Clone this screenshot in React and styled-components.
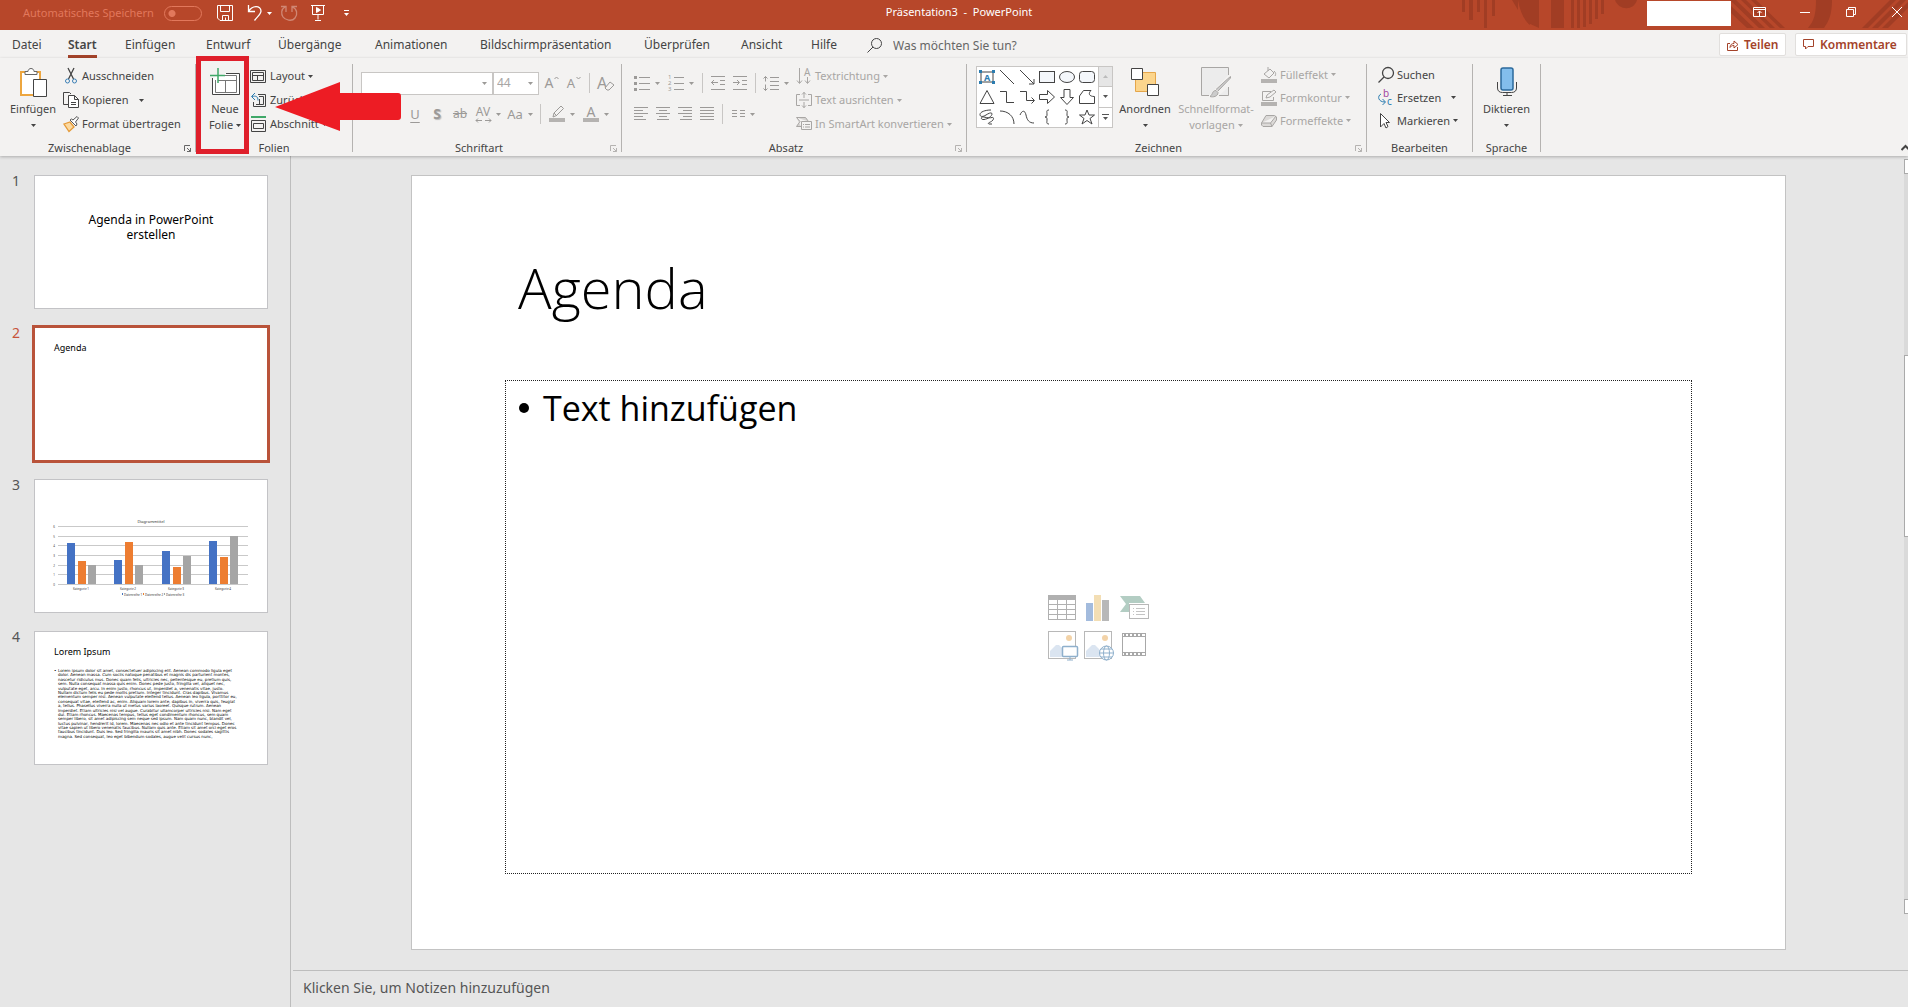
import React from 'react';
import styled, { createGlobalStyle, css } from 'styled-components';

const UI = '"Noto Sans", "Open Sans", sans-serif';
const SLIDE = '"Open Sans", "Noto Sans", sans-serif';

const Global = createGlobalStyle`
  *, *::before, *::after { box-sizing: border-box; }
  body { margin: 0; background: #e6e6e6; font-family: ${UI}; color: #444; }
  button, input, select, textarea { font: inherit; color: inherit; margin: 0; padding: 0; border: 0; background: none; border-radius: 0; }
  ul, ol, h1, h2, p { margin: 0; padding: 0; list-style: none; font-weight: inherit; }
`;

const Page = styled.div`
  display: flex;
  flex-direction: column;
  min-height: 100vh;
  overflow: hidden;
`;

const Glyph = styled.svg`
  display: block;
  flex: none;
  fill: none;
  stroke: currentColor;
  stroke-width: 1;
  overflow: visible;
`;

function Icon({ w = 16, h = 16, children }) {
  return (
    <Glyph width={w} height={h} viewBox={`0 0 ${w} ${h}`} aria-hidden="true">
      {children}
    </Glyph>
  );
}

const Caret = () => (
  <Icon w={5} h={3}>
    <path d="M0 0h5L2.500 3z" fill="currentColor" stroke="none" />
  </Icon>
);

/* ---------- title bar ---------- */

const TitleBar = styled.header`
  position: relative;
  display: grid;
  grid-template-columns: 1fr auto 1fr;
  align-items: start;
  height: 30px;
  background: #b7472a;
  color: #fff;
  font-size: 11px;
  line-height: 16px;
`;
const Art = styled.svg`
  position: absolute;
  right: 0;
  top: 0;
  fill: #a13d24;
`;
const Quick = styled.div`
  display: flex;
  align-items: center;
  height: 26px;
  padding-left: 23px;
`;
const AutoSave = styled.label`
  display: flex;
  align-items: center;
  gap: 10px;
  margin-right: 15px;
  color: #e2785c;
`;
const Toggle = styled.input`
  appearance: none;
  width: 38px;
  height: 15px;
  border: 1px solid #e2785c;
  border-radius: 8px;
  background: radial-gradient(circle at 7px 50%, #e2785c 3px, transparent 4px);
`;
const QuickButton = styled.button`
  display: flex;
  align-items: center;
  gap: 4px;
  width: ${(p) => p.$w}px;
  height: 24px;
  opacity: ${(p) => (p.disabled ? 0.35 : 1)};
`;
const FileName = styled.h1`
  position: relative;
  padding: 4px 0 0 10px;
  font-size: 11px;
  white-space: pre;
`;
const WindowButtons = styled.div`
  position: relative;
  display: flex;
  justify-content: flex-end;
  align-items: flex-start;
`;
const Account = styled.div`
  width: 84px;
  height: 25px;
  margin: 1px 5px 0 0;
  background: #fff;
`;
const WindowButton = styled.button`
  display: flex;
  align-items: center;
  justify-content: ${(p) => (p.$end ? 'flex-end' : 'center')};
  width: ${(p) => (p.$end ? 34 : 46)}px;
  height: 24px;
  padding-right: ${(p) => (p.$end ? 6 : 0)}px;
`;

/* ---------- tabs ---------- */

const TabBar = styled.nav`
  display: flex;
  height: 28px;
  padding-left: 12px;
  background: #f3f2f1;
  font-size: 12px;
`;
const TabSlot = styled.div`
  width: ${(p) => p.$w}px;
`;
const Tab = styled.button`
  height: 28px;
  padding-top: 5px;
  line-height: 20px;
  border-bottom: 3px solid ${(p) => (p.$active ? '#a4432a' : 'transparent')};
  font-weight: ${(p) => (p.$active ? 600 : 400)};
  white-space: nowrap;
`;
const Search = styled.label`
  display: flex;
  align-items: center;
  gap: 11px;
  height: 30px;
`;
const SearchInput = styled.input`
  width: 160px;
  outline: none;
  &::placeholder { color: #666; opacity: 1; }
`;
const TabActions = styled.div`
  display: flex;
  gap: 9px;
  margin: 3px 1px 2px auto;
`;
const ActionButton = styled.button`
  display: flex;
  align-items: center;
  gap: 6px;
  width: ${(p) => p.$w}px;
  padding-left: 7px;
  border: 1px solid #e1dfdd;
  border-radius: 2px;
  background: #fff;
  color: #a4432a;
  font-weight: 600;
`;

/* ---------- ribbon ---------- */

const Ribbon = styled.div`
  position: relative;
  z-index: 1;
  display: flex;
  height: 98px;
  background: #f3f2f1;
  box-shadow: 0 1px 3px rgba(0, 0, 0, 0.25);
  font-size: 11px;
  line-height: 16px;
  white-space: nowrap;
`;
const Divider = styled.div`
  width: 1px;
  margin: 6px 0 4px;
  background: #b5b3b1;
`;
const GroupBox = styled.section`
  display: flex;
  flex-direction: column;
  width: ${(p) => p.$w}px;
`;
const GroupBody = styled.div`
  display: flex;
  align-items: flex-start;
  height: 82px;
  padding-left: ${(p) => p.$pad}px;
`;
const GroupFoot = styled.footer`
  display: flex;
  align-items: center;
  height: 16px;
`;
const GroupName = styled.h2`
  flex: 1;
  font-size: 11px;
  text-align: center;
`;
const Launcher = styled.button`
  width: 16px;
  padding-left: 5px;
  color: ${(p) => (p.disabled ? '#b5b3b1' : '#666')};
`;
const BigButton = styled.button`
  display: flex;
  flex-direction: column;
  align-items: center;
  width: ${(p) => p.$w}px;
  margin-left: ${(p) => p.$gap || 0}px;
  padding-top: 8px;
  color: ${(p) => (p.disabled ? '#a8a6a4' : '#444')};
`;
const BigIcon = styled.span`
  display: flex;
  align-items: center;
  height: 32px;
  margin-bottom: 3px;
`;
const BigLine = styled.span`
  display: flex;
  align-items: center;
  justify-content: center;
  gap: 3px;
  height: 16px;
`;
const List = styled.div`
  display: flex;
  flex-direction: column;
  padding-top: ${(p) => (p.$tight ? 5 : 6)}px;
  margin-left: ${(p) => p.$gap || 0}px;
`;
const Item = styled.button`
  display: flex;
  align-items: center;
  gap: 3px;
  height: ${(p) => p.$h}px;
  color: ${(p) => (p.disabled ? '#a8a6a4' : '#444')};
`;
const ItemCaret = styled.span`
  margin-left: ${(p) => p.$gap}px;
`;
const Tools = styled.div`
  display: flex;
  flex-direction: column;
  gap: 9px;
  padding-top: 14px;
  color: #9c9a98;
`;
const ToolRow = styled.div`
  display: flex;
  align-items: center;
  height: 22px;
  padding-left: ${(p) => p.$pad || 0}px;
`;
const Tool = styled.button`
  display: flex;
  align-items: center;
  justify-content: center;
  gap: 5px;
  width: ${(p) => p.$w || 22}px;
  height: 22px;
`;
const ToolDivider = styled.div`
  width: 1px;
  height: 20px;
  margin: 0 4px;
  background: #c8c6c4;
`;
const Letter = styled.span`
  font-size: ${(p) => p.$size || 13}px;
  ${(p) => p.$kind === 'under' && css`text-decoration: underline; text-underline-offset: 3px;`}
  ${(p) => p.$kind === 'strike' && css`text-decoration: line-through;`}
  ${(p) => p.$kind === 'bold' && css`font-weight: 700; text-shadow: 1px 1px 1px #bbb;`}
`;
const Raised = styled.span`
  display: flex;
  align-items: flex-start;
  gap: 1px;
`;
const Stack = styled.span`
  display: flex;
  flex-direction: column;
  align-items: center;
  line-height: 12px;
`;
const Swatch = styled.span`
  width: 16px;
  height: 4px;
  background: #b5b3b1;
`;
const Combo = styled.label`
  display: grid;
  align-items: center;
  width: ${(p) => p.$w}px;
  height: 23px;
  margin-right: ${(p) => p.$after || 0}px;
  border: 1px solid #c8c6c4;
  background: #fff;
  & > * { grid-area: 1 / 1; }
  & > svg { justify-self: end; margin-right: 5px; }
`;
const Select = styled.select`
  appearance: none;
  width: 100%;
  height: 21px;
  padding-left: 3px;
  color: #a8a6a4;
  font-size: 12px;
  opacity: 1;
`;
const Gallery = styled.div`
  display: flex;
  width: 137px;
  height: 62px;
  margin-top: 8px;
  border: 1px solid #c8c6c4;
  background: #fff;
`;
const Shapes = styled.div`
  display: grid;
  grid-template-columns: repeat(6, 20px);
  grid-auto-rows: 20px;
  width: 121px;
`;
const ShapeButton = styled.button`
  display: grid;
  place-items: center;
`;
const GalleryScroll = styled.div`
  display: flex;
  flex-direction: column;
  width: 14px;
  border-left: 1px solid #c8c6c4;
`;
const ScrollStep = styled.button`
  display: grid;
  place-items: center;
  flex: 1;
  background: ${(p) => (p.disabled ? '#e6e6e6' : '#fff')};
  color: ${(p) => (p.disabled ? '#bbb' : '#555')};
  border-bottom: ${(p) => (p.$last ? 0 : 1)}px solid #c8c6c4;
`;
const Collapse = styled.button`
  align-self: flex-end;
  width: 7px;
  height: 16px;
  margin-left: auto;
  overflow: hidden;
`;

/* marks drawn over the ribbon */
const MarkBox = styled.div`
  position: absolute;
  left: 196px;
  top: -2px;
  width: 53px;
  height: 98px;
  border: 5px solid #df1f2b;
`;
const MarkArrow = styled.svg`
  position: absolute;
  left: 275px;
  top: 23px;
  fill: #ed1c24;
`;

/* ---------- workspace ---------- */

const Workspace = styled.main`
  display: flex;
  flex: 1;
`;
const Thumbs = styled.ol`
  display: flex;
  flex-direction: column;
  gap: 18px;
  width: 291px;
  padding: 19px 0 0 12px;
  border-right: 1px solid #bdbdbd;
`;
const ThumbItem = styled.li`
  display: grid;
  grid-template-columns: 22px 234px;
  color: ${(p) => (p.$active ? '#c7533a' : '#555')};
  font-size: 14px;
  line-height: 12px;
`;
const Thumb = styled.div`
  height: 134px;
  border: 1px solid ${(p) => (p.$active ? '#b9533a' : '#c3c3c6')};
  box-shadow: 0 0 0 ${(p) => (p.$active ? 2 : 0)}px #b9533a;
  background: #fff;
  color: #000;
`;
const CoverTitle = styled.p`
  padding-top: 36px;
  font-size: 12px;
  line-height: 15px;
  text-align: center;
`;
const SmallTitle = styled.p`
  padding: 13px 0 0 19px;
  font-size: 9px;
  line-height: 14px;
`;
const Lorem = styled.div`
  display: flex;
  flex-direction: column;
  justify-content: space-between;
  height: 70px;
  margin: 10px 0 0 23px;
  font-family: "DejaVu Sans", sans-serif;
  font-size: 4px;
  line-height: 4px;
  white-space: nowrap;
`;
const Bullet = styled.span`
  display: inline-block;
  width: 4px;
  margin-left: -4px;
`;

const Editor = styled.div`
  display: flex;
  flex-direction: column;
  flex: 1;
`;
const Stage = styled.div`
  display: flex;
  justify-content: space-between;
  flex: 1;
`;
const Canvas = styled.div`
  display: flex;
  justify-content: center;
  align-items: flex-start;
  flex: 1;
  padding: 19px 118px 20px 120px;
`;
const Slide = styled.article`
  display: flex;
  flex-direction: column;
  width: 100%;
  aspect-ratio: 1375 / 775;
  padding: 0 93px 75px 93px;
  border: 1px solid #c3c3c3;
  background: #fff;
  color: #000;
  font-family: ${SLIDE};
`;
const SlideTitle = styled.h2`
  height: 204px;
  padding: 73px 0 0 13px;
  font-size: 56px;
  line-height: 76px;
  font-weight: 300;
`;
const Body = styled.div`
  display: grid;
  flex: 1;
  border: 1px dotted #222;
  & > * { grid-area: 1 / 1; }
`;
const Points = styled.ul`
  padding: 3px 0 0 37px;
  font-size: 34px;
  line-height: 48px;
`;
const Point = styled.li`
  &::before {
    content: '';
    display: inline-block;
    width: 10px;
    height: 10px;
    margin: 0 14px 8px -24px;
    border-radius: 50%;
    background: #000;
  }
`;
const Picker = styled.div`
  display: grid;
  grid-template-columns: repeat(3, 30px);
  grid-auto-rows: 30px;
  gap: 6px;
  place-self: center;
`;
const PickerButton = styled.button`
  display: block;
`;
const ScrollBar = styled.div`
  display: flex;
  flex-direction: column;
  width: 4px;
  padding: 3px 0 56px;
  background: linear-gradient(#dadada, #dadada) content-box;
`;
const ScrollPart = styled.div`
  flex: ${(p) => p.$flex};
  ${(p) => p.$solid && css`background: #fff; border: 1px solid #aaa; border-right: 0;`}
`;
const Notes = styled.label`
  display: block;
  height: 37px;
  margin-left: 2px;
  border-top: 1px solid #bdbdbd;
`;
const NotesInput = styled.textarea`
  display: block;
  width: 100%;
  height: 36px;
  padding: 6px 0 0 10px;
  resize: none;
  outline: none;
  font-size: 14px;
  line-height: 22px;
  &::placeholder { color: #555; opacity: 1; }
`;

/* ---------- data ---------- */

const tabs = [
  ['Datei', 56], ['Start', 57], ['Einfügen', 81], ['Entwurf', 72], ['Übergänge', 97],
  ['Animationen', 105], ['Bildschirmpräsentation', 164], ['Überprüfen', 97], ['Ansicht', 70], ['Hilfe', 56],
];

const lorem = [
  'Lorem ipsum dolor sit amet, consectetuer adipiscing elit. Aenean commodo ligula eget',
  'dolor. Aenean massa. Cum sociis natoque penatibus et magnis dis parturient montes,',
  'nascetur ridiculus mus. Donec quam felis, ultricies nec, pellentesque eu, pretium quis,',
  'sem. Nulla consequat massa quis enim. Donec pede justo, fringilla vel, aliquet nec,',
  'vulputate eget, arcu. In enim justo, rhoncus ut, imperdiet a, venenatis vitae, justo.',
  'Nullam dictum felis eu pede mollis pretium. Integer tincidunt. Cras dapibus. Vivamus',
  'elementum semper nisi. Aenean vulputate eleifend tellus. Aenean leo ligula, porttitor eu,',
  'consequat vitae, eleifend ac, enim. Aliquam lorem ante, dapibus in, viverra quis, feugiat',
  'a, tellus. Phasellus viverra nulla ut metus varius laoreet. Quisque rutrum. Aenean',
  'imperdiet. Etiam ultricies nisi vel augue. Curabitur ullamcorper ultricies nisi. Nam eget',
  'dui. Etiam rhoncus. Maecenas tempus, tellus eget condimentum rhoncus, sem quam',
  'semper libero, sit amet adipiscing sem neque sed ipsum. Nam quam nunc, blandit vel,',
  'luctus pulvinar, hendrerit id, lorem. Maecenas nec odio et ante tincidunt tempus. Donec',
  'vitae sapien ut libero venenatis faucibus. Nullam quis ante. Etiam sit amet orci eget eros',
  'faucibus tincidunt. Duis leo. Sed fringilla mauris sit amet nibh. Donec sodales sagittis',
  'magna. Sed consequat, leo eget bibendum sodales, augue velit cursus nunc,',
];

const shapes = [
  <g key="0"><rect x="2" y="3" width="12" height="10" stroke="#444" /><g fill="#2b7cb0" stroke="none"><path d="M0 1h3v3H0zM13 1h3v3h-3zM0 12h3v3H0zM13 12h3v3h-3z" /></g><text x="8" y="11.500" fontSize="9" fontWeight="700" fill="#2b7cb0" stroke="none" textAnchor="middle">A</text></g>,
  <path key="1" d="M1 1l14 14" />,
  <g key="2"><path d="M1 1l14 14" /><path d="M15 10v5h-5" /></g>,
  <rect key="3" x="0.500" y="2.500" width="15" height="11" fill="#f4f7fb" />,
  <ellipse key="4" cx="8" cy="8" rx="7.500" ry="5.500" fill="#f4f7fb" />,
  <rect key="5" x="0.500" y="2.500" width="15" height="11" rx="3" fill="#f4f7fb" />,
  <path key="6" d="M8 1.500l7 13H1z" />,
  <path key="7" d="M1 2.500h6.500v11H15" />,
  <g key="8"><path d="M1 2.500h6.500v9H15" /><path d="M12.500 8.500l3 3-3 3" /></g>,
  <path key="9" d="M.5 5.500h8v-4L15.500 8l-7 6.500v-4h-8z" />,
  <path key="10" d="M5 .5h6v8h3.500L8 15.500 1.500 8.500H5z" />,
  <path key="11" d="M.5 14.500V7l4-5.500h7.500c-3 3-2 6 3.500 6v7z" />,
  <path key="12" d="M12 1C6 1 1 3 1 5.500S4 8 7 6s6-3 6-1-4 5-8 5.500S2 7 5 8s6 1 8 .5 2 2 0 3.500-5 2-3 3h3" />,
  <path key="13" d="M1 2c8 0 14 5 14 13" />,
  <path key="14" d="M1 6c2-5 5-5 6 0s3 8 8 8" />,
  <path key="15" d="M10 1c-3 0-2 2-2 4s0 3-2 3c2 0 2 1 2 3s-1 4 2 4" />,
  <path key="16" d="M6 1c3 0 2 2 2 4s0 3 2 3c-2 0-2 1-2 3s1 4-2 4" />,
  <path key="17" d="M8 1l2 5h5.500l-4.500 3.500 2 5.500-5-3.500L3 15l2-5.500L.5 6H6z" />,
];

const bars = [
  [33, 64, 82, 86], [80, 81, 63, 86], [128, 72, 88, 77], [175, 62, 78, 57],
];
const barColors = ['#4472c4', '#ed7d31', '#a5a5a5'];

function Chart() {
  return (
    <Glyph width="232" height="132" viewBox="0 0 232 132" role="img" aria-label="Diagramm">
      {[0, 1, 2, 3, 4, 5, 6].map((n) => {
        const y = Math.round(105 - n * 9.700) - 0.5;
        return (
          <g key={n}>
            <path d={`M23 ${y}H213`} stroke="#c9c9c9" />
            <text x="19" y={y + 1} fontSize="3" fill="#444" stroke="none" textAnchor="middle">{n}</text>
          </g>
        );
      })}
      <text x="116" y="43" fontSize="4" fill="#333" stroke="none" textAnchor="middle">Diagrammtitel</text>
      {bars.map(([x, ...tops], i) => (
        <g key={x} stroke="none">
          {tops.map((t, j) => (
            <rect key={j} x={x - 1 + Math.round(j * 10.500)} y={t - 1} width="8" height={105 - t} fill={barColors[j]} />
          ))}
          <text x={x + 13} y="110" fontSize="3" fill="#333" textAnchor="middle">{`Kategorie ${i + 1}`}</text>
        </g>
      ))}
      {[0, 1, 2].map((i) => (
        <g key={i} stroke="none">
          <rect x={87 + i * 21} y="113" width="1" height="2" fill={barColors[i]} />
          <text x={89 + i * 21} y="116" fontSize="3" fill="#333">{`Datenreihe ${i + 1}`}</text>
        </g>
      ))}
    </Glyph>
  );
}

function Group({ name, w, pad = 0, launcher, disabledLauncher, children }) {
  return (
    <>
      <GroupBox $w={w}>
        <GroupBody $pad={pad}>{children}</GroupBody>
        <GroupFoot>
          <GroupName>{name}</GroupName>
          {launcher && (
            <Launcher aria-label={`${name} Optionen`} disabled={disabledLauncher}>
              <Icon w={7} h={7}><path d="M.5 6V.5H6M3 3l3.500 3.500M6.500 3v3.500H3" /></Icon>
            </Launcher>
          )}
        </GroupFoot>
      </GroupBox>
      <Divider />
    </>
  );
}

function ListItem({ icon, text, caret, h = 24, disabled }) {
  return (
    <Item $h={h} disabled={disabled}>
      <Icon>{icon}</Icon>
      {text}
      {caret !== undefined && <ItemCaret $gap={caret}><Caret /></ItemCaret>}
    </Item>
  );
}

function Lines({ rows }) {
  return (
    <Icon w={14} h={14}>
      {rows.map(([a, b], i) => <path key={i} d={`M${a} ${i * 3 + 0.5}H${b}`} />)}
    </Icon>
  );
}

function ImageBase() {
  return (
    <>
      <rect x="0.500" y="1.500" width="27" height="27" stroke="#b8b8b8" />
      <circle cx="21" cy="8" r="3" fill="#f3d3a8" stroke="none" />
      <path d="M2 27v-6l6-6h3l5 5v7z" fill="#dbe5f1" stroke="none" />
    </>
  );
}

const picker = [
  ['Tabelle', <g key="t" stroke="#b0b0b0"><rect x="0.500" y="1.500" width="27" height="24" /><path d="M0 1h28v5H0z" fill="#b0b0b0" stroke="none" /><path d="M9.500 6v19M18.500 6v19M1 10.500h27M1 15.500h27M1 20.500h27" /></g>],
  ['Diagramm', <g key="d" stroke="none"><path d="M2 9h7v18H2z" fill="#a3bbdd" /><path d="M10 1h7v26h-7z" fill="#f3deb4" /><path d="M18 6h7v21h-7z" fill="#b8b8b8" /></g>],
  ['SmartArt', <g key="s"><path d="M0 2h20l5 7h-16v9H0l6-8z" fill="#b3cdc3" stroke="none" /><rect x="9.500" y="10.500" width="19" height="14" fill="#fff" stroke="#b8b8b8" /><path d="M13 14.500h1M16 14.500h9M13 17.500h1M16 17.500h9M13 20.500h1M16 20.500h9" stroke="#c4c4c4" /></g>],
  ['Bilder', <g key="b"><ImageBase /><rect x="14.500" y="16.500" width="15" height="10" rx="1" fill="#fff" stroke="#8fb0cc" strokeWidth="1.500" /><path d="M22 27v3M19 30h6" stroke="#8fb0cc" /></g>],
  ['Onlinebilder', <g key="o"><ImageBase /><g stroke="#8fb0cc"><circle cx="22.500" cy="23" r="7" fill="#fff" /><ellipse cx="22.500" cy="23" rx="3" ry="7" /><path d="M15.500 23h14M17 19h11M17 27h11" /></g></g>],
  ['Video', <g key="v" stroke="#a8a8a8"><rect x="2.500" y="3.500" width="23" height="22" /><path d="M3 6.500h22M3 22.500h22" /><path d="M4 5h20M4 24h20" strokeWidth="2" strokeDasharray="2 2" /></g>],
];

export default function App() {
  return (
    <Page>
      <Global />
      <TitleBar>
        <Art width="448" height="30" viewBox="0 0 448 30">
          <path d="M2 0h3v12H2zM9 0h4v20H9zM17 0h3v12h-3zM24 0h3v28h-3zM32 0h3v16h-3zM52 0h6v10zM68 0h11v28L68 23z" />
          <path d="M58 0h12v25c-7-6-10-14-12-25zM91 0h13v28H91zM111 0h3v28h-3zM117 0h3v28h-3zM123 0h3v27h-3zM129 0h3v24h-3zM135 0h3v19h-3zM141 0h3v14h-3zM155 0h22c-3 11-18 11-22 0z" />
          <path d="M271 6l23 22h-7l-16-15zM276 0l29 28h-6L270 0zM286 0l29 28h-5L281 0zM296 0l29 28h-5L291 0zM356 0h16c0 14-3 21-8 28h-16c6-7 8-14 8-28zM402 28l28-28h6l-28 28zM412 28l28-28h6l-28 28zM422 28l26-26v6l-20 20z" />
        </Art>
        <Quick>
          <AutoSave>
            Automatisches Speichern
            <Toggle type="checkbox" role="switch" />
          </AutoSave>
          <QuickButton $w={30} aria-label="Speichern">
            <Icon><path d="M.5 .5h15v15H3L.5 13zM3.500 .5v6h9v-6M5.500 15.500v-5h6v5M8.500 12.500v3" /></Icon>
          </QuickButton>
          <QuickButton $w={34} aria-label="Rückgängig">
            <Icon><path d="M1.500 0v6.500H8M1.500 6.500C5 0 14 0 14 6c0 3-3 5-6.500 9.500" strokeWidth="1.300" /></Icon>
            <Caret />
          </QuickButton>
          <QuickButton $w={30} disabled aria-label="Wiederholen">
            <Icon><path d="M4 2C0 4 0 9 2 12s9 5 12 1 2-9-2.500-11M11 7V1.500h5M0 1.500h5V7" strokeWidth="1.300" /></Icon>
          </QuickButton>
          <QuickButton $w={33} aria-label="Präsentation starten">
            <Icon><path d="M0 .5h14M1.500 .5v9h11v-9M7 9.500v5M4 15.500h6" /><path d="M5.500 2.500v5l4-2.500z" fill="currentColor" /></Icon>
          </QuickButton>
          <QuickButton $w={10} aria-label="Symbolleiste anpassen">
            <Icon w={5} h={6}><path d="M0 .5h5" /><path d="M0 3h5L2.500 6z" fill="currentColor" stroke="none" /></Icon>
          </QuickButton>
        </Quick>
        <FileName>{'Präsentation3  -  PowerPoint'}</FileName>
        <WindowButtons>
          <Account />
          <WindowButton aria-label="Menübandanzeige"><Icon w={13} h={10}><path d="M.5 .5h12v9H.5zM.5 2.500h12M6.500 9V4M4.500 6l2-2 2 2" /></Icon></WindowButton>
          <WindowButton aria-label="Minimieren"><Icon w={10} h={10}><path d="M0 5.500h10" /></Icon></WindowButton>
          <WindowButton aria-label="Wiederherstellen"><Icon w={10} h={10}><path d="M.5 2.500h7v7h-7zM2.500 2.500v-2h7v7h-2" /></Icon></WindowButton>
          <WindowButton $end aria-label="Schließen"><Icon w={10} h={10}><path d="M0 0l10 10M10 0L0 10" /></Icon></WindowButton>
        </WindowButtons>
      </TitleBar>

      <TabBar>
        {tabs.map(([t, w]) => (
          <TabSlot key={t} $w={w}><Tab $active={t === 'Start'}>{t}</Tab></TabSlot>
        ))}
        <Search>
          <Icon w={15} h={15}><circle cx="9.500" cy="5.500" r="5" /><path d="M6 9L.5 14.500" /></Icon>
          <SearchInput placeholder="Was möchten Sie tun?" aria-label="Suche" />
        </Search>
        <TabActions>
          <ActionButton $w={67}>
            <Icon w={11} h={12}><path d="M3 4.500H.5v7h10V8M3 8.500c0-3 2-4 4-4V2L11 5.500 7 9V6.500c-2 0-3 .5-4 2z" /></Icon>
            Teilen
          </ActionButton>
          <ActionButton $w={112}>
            <Icon w={11} h={11}><path d="M.5 .5h10v7H5l-2.500 2.500V7.500h-2z" /></Icon>
            Kommentare
          </ActionButton>
        </TabActions>
      </TabBar>

      <Ribbon>
        <Group name="Zwischenablage" w={195} pad={6} launcher>
          <BigButton $w={54}>
            <BigIcon>
              <Icon w={28} h={30}>
                <path d="M2 5h19v23H2z" fill="#fff" stroke="#eda63f" strokeWidth="2" />
                <path d="M6 7.500V4.500h3c0-4 6-4 6 0h3v3z" fill="#fff" stroke="#666" />
                <path d="M14.500 12.500h13v17h-13z" fill="#fff" stroke="#444" />
              </Icon>
            </BigIcon>
            <BigLine>Einfügen</BigLine>
            <BigLine><Caret /></BigLine>
          </BigButton>
          <List $gap={3}>
            <ListItem text="Ausschneiden" icon={<><path d="M5 0l5.500 11M11 0L5.500 11" strokeWidth="1.300" /><g stroke="#3a7fb5"><circle cx="4.500" cy="13" r="2" /><circle cx="11.500" cy="13" r="2" /></g></>} />
            <ListItem text="Kopieren" caret={7} icon={<><path d="M5 12.500H.5v-12h6L8 2" /><path d="M5.500 3.500h6l4 4v8h-10zM11.500 3.500v4h4M8 10.500h5M8 12.500h5" fill="#fff" /></>} />
            <ListItem text="Format übertragen" icon={<><path d="M1 8l6-2 4 5-5 4.500z" fill="#fbd9a0" stroke="#e59a38" strokeWidth="1.300" /><path d="M7 4l6 6 1-2-1.500-2L15.500 2 14 .5 10 4 8.500 3z" fill="#fff" stroke="#555" /></>} />
          </List>
        </Group>

        <Group name="Folien" w={156} pad={3}>
          <BigButton $w={52}>
            <BigIcon>
              <Icon w={30} h={28}>
                <path d="M2.500 10v16.500h27v-21H16" fill="#fff" stroke="#444" />
                <path d="M5.500 12v12.500h21v-17H13M8 12.500h18M15.500 12.500v12" fill="none" stroke="#777" />
                <path d="M8 0v15M0 7.500h15" stroke="#3fa868" strokeWidth="1.500" />
              </Icon>
            </BigIcon>
            <BigLine>Neue</BigLine>
            <BigLine>Folie<Caret /></BigLine>
          </BigButton>
          <List>
            <ListItem text="Layout" caret={0} icon={<path d="M-.5 2.500h15v12h-15zM1.500 4.500h11v8h-11zM1.500 7.500h11M6.500 7.500v5" />} />
            <ListItem text="Zurücksetzen" icon={<><path d="M7 2.500h7.500v12H2.500V10M8 4.500h4.500v8H5M8.500 7v5" /><path d="M1 4.500c4-1 6 0 6 4M4 1L.5 4.500 4 8" stroke="#2b7cb0" /></>} />
            <ListItem text="Abschnitt" caret={0} icon={<><path d="M0 0h15v2H0z" fill="#3fa868" stroke="none" /><path d="M.5 4.500h14v11H.5zM2.500 7.500h10v5h-10z" /></>} />
          </List>
        </Group>

        <Group name="Schriftart" w={268} pad={8} launcher disabledLauncher>
          <Tools>
            <ToolRow>
              <Combo $w={132}><Select aria-label="Schriftart" disabled><option></option></Select><Caret /></Combo>
              <Combo $w={46} $after={2}><Select aria-label="Schriftgrad" disabled><option>44</option></Select><Caret /></Combo>
              <Tool disabled><Raised><Letter $size={14}>A</Letter><Icon w={5} h={7}><path d="M.5 4L2.500 2l2 2" /></Icon></Raised></Tool>
              <Tool disabled><Raised><Letter>A</Letter><Icon w={5} h={7}><path d="M.5 2l2 2 2-2" /></Icon></Raised></Tool>
              <ToolDivider />
              <Tool disabled><Raised><Letter $size={16}>A</Letter><Icon w={5} h={16}><path d="M-3 13l5-6 4 3-5 5h-2z" fill="#f3f2f1" /></Icon></Raised></Tool>
            </ToolRow>
            <ToolRow $pad={43}>
              <Tool disabled><Letter $kind="under">U</Letter></Tool>
              <Tool disabled><Letter $kind="bold" $size={14}>S</Letter></Tool>
              <Tool $w={24} disabled><Letter $kind="strike" $size={12}>ab</Letter></Tool>
              <Tool $w={32} disabled>
                <Stack><Letter $size={12}>AV</Letter><Icon w={15} h={5}><path d="M0 2.500h6M9 2.500h6M2 .5l-2 2 2 2M13 .5l2 2-2 2" /></Icon></Stack><Caret />
              </Tool>
              <Tool $w={32} disabled><Letter>Aa</Letter><Caret /></Tool>
              <ToolDivider />
              <Tool $w={34} disabled>
                <Stack><Icon w={16} h={12}><path d="M4 11l1-4 7-7 2.500 2.500-7 7zM5 7l3 3" /></Icon><Swatch /></Stack><Caret />
              </Tool>
              <Tool $w={34} disabled><Stack><Letter $size={14}>A</Letter><Swatch /></Stack><Caret /></Tool>
            </ToolRow>
          </Tools>
        </Group>

        <Group name="Absatz" w={344} pad={8} launcher disabledLauncher>
          <Tools>
            <ToolRow>
              <Tool $w={34} disabled><Icon><path d="M5 2.500h11M5 8.500h11M5 14.500h11" /><path d="M0 1h3v3H0zM0 7h3v3H0zM0 13h3v3H0z" fill="currentColor" stroke="none" /></Icon><Caret /></Tool>
              <Tool $w={34} disabled><Icon><path d="M6 2.500h10M6 8.500h10M6 14.500h10" /><g fill="currentColor" stroke="none" fontSize="6"><text x="0" y="4">1</text><text x="0" y="10">2</text><text x="0" y="16">3</text></g></Icon><Caret /></Tool>
              <ToolDivider />
              <Tool disabled><Icon w={14} h={14}><path d="M0 .5h14M9 4.500h5M9 8.500h5M0 13.500h14M0 6.500h7M3 4L.5 6.500 3 9" /></Icon></Tool>
              <Tool disabled><Icon w={14} h={14}><path d="M0 .5h14M9 4.500h5M9 8.500h5M0 13.500h14M0 6.500h6M4 4l2.500 2.500L4 9" /></Icon></Tool>
              <ToolDivider />
              <Tool $w={32} disabled><Icon><path d="M7 2.500h9M7 6.500h9M7 10.500h9M7 14.500h9M2.500 1.500v5M2.500 9.500v6M.5 3.500l2-2 2 2M.5 13.500l2 2 2-2" /></Icon><Caret /></Tool>
            </ToolRow>
            <ToolRow>
              <Tool disabled><Lines rows={[[0, 14], [0, 9], [0, 14], [0, 9], [0, 12]]} /></Tool>
              <Tool disabled><Lines rows={[[0, 14], [3, 11], [0, 14], [3, 11], [1, 13]]} /></Tool>
              <Tool disabled><Lines rows={[[0, 14], [5, 14], [0, 14], [5, 14], [2, 14]]} /></Tool>
              <Tool disabled><Lines rows={[[0, 14], [0, 14], [0, 14], [0, 14], [0, 14]]} /></Tool>
              <ToolDivider />
              <Tool $w={32} disabled><Icon w={13} h={8}><path d="M0 .5h5M0 3.500h5M0 6.500h5M8 .5h5M8 3.500h5M8 6.500h5" /></Icon><Caret /></Tool>
            </ToolRow>
          </Tools>
          <List $gap={4}>
            <ListItem disabled text="Textrichtung" caret={0} icon={<><path d="M3.500 0v15M1 12.500l2.500 3 2.500-3M11.500 9v6M9 12.500l2.500 3 2.500-3" /><text x="8" y="8" fontSize="10" fill="currentColor" stroke="none">A</text></>} />
            <ListItem disabled text="Text ausrichten" caret={0} icon={<path d="M4 2.500H.5v11H4M12 2.500h3.500v11H12M3 8h10M8 0v6M8 10v6M6 2.500L8 .5l2 2M6 13.500l2 2 2-2" />} />
            <ListItem disabled text="In SmartArt konvertieren" caret={0} icon={<><path d="M.5 1.500h9l3 4M.5 1.500L4 5.500.5 10.500H5" fill="#d5d3d1" /><path d="M5.500 5.500h10v8h-10zM7 8.500h1M9 8.500h5M7 11h1M9 11h5" fill="#f3f2f1" /></>} />
          </List>
        </Group>

        <Group name="Zeichnen" w={399} pad={9} launcher disabledLauncher>
          <Gallery>
            <Shapes>
              {shapes.map((s, i) => <ShapeButton key={i} aria-label={`Form ${i + 1}`}><Icon>{s}</Icon></ShapeButton>)}
            </Shapes>
            <GalleryScroll>
              <ScrollStep disabled aria-label="Nach oben"><Icon w={5} h={3}><path d="M0 3h5L2.500 0z" fill="currentColor" stroke="none" /></Icon></ScrollStep>
              <ScrollStep aria-label="Nach unten"><Caret /></ScrollStep>
              <ScrollStep $last aria-label="Mehr"><Icon w={7} h={6}><path d="M0 .5h7" /><path d="M1 3h5L3.500 6z" fill="currentColor" stroke="none" /></Icon></ScrollStep>
            </GalleryScroll>
          </Gallery>
          <BigButton $w={58} $gap={3}>
            <BigIcon>
              <Icon w={28} h={28}>
                <path d="M4.500 4.500h20v19h-20z" fill="#fcd58c" stroke="#e5a64a" />
                <path d="M.5 .5h11v11H.5zM16.500 16.500h11v11h-11z" fill="#fff" stroke="#444" />
              </Icon>
            </BigIcon>
            <BigLine>Anordnen</BigLine>
            <BigLine><Caret /></BigLine>
          </BigButton>
          <BigButton $w={84} disabled>
            <BigIcon>
              <Icon w={30} h={30}>
                <path d="M8 28.500H.5V.5h27V8M27.500 20v8.500H18" fill="#ececec" />
                <path d="M9 29.500c3 1 8 0 8-4l-2-2c-4 0-3 4-6 6zM17 24L29.500 11v-1.500L26.500 12 15 22.500" fill="#ccc" />
              </Icon>
            </BigIcon>
            <BigLine>Schnellformat-</BigLine>
            <BigLine>vorlagen<Caret /></BigLine>
          </BigButton>
          <List $gap={3} $tight>
            <ListItem h={23} disabled text="Fülleffekt" caret={0} icon={<><path d="M3 7l6-5 4 4-5 5zM7 4V0M13 4c2 2 2 3 1 5" /><path d="M0 12h16v4H0z" fill="#b5b3b1" stroke="none" /></>} />
            <ListItem h={23} disabled text="Formkontur" caret={0} icon={<><path d="M10 1.500H1.500v9h11V7M5 8l1-3 7-5 2 2-6 5z" /><path d="M0 12h16v4H0z" fill="#b5b3b1" stroke="none" /></>} />
            <ListItem h={23} disabled text="Formeffekte" caret={0} icon={<path d="M.5 10L5 2.500h8.500L15.500 4v3L11 13.500H2L.5 12zM.5 10h9L15 3M9.500 10l1.500 3.500" fill="#dcdad8" />} />
          </List>
        </Group>

        <Group name="Bearbeiten" w={105} pad={11}>
          <List $tight>
            <ListItem h={23} text="Suchen" icon={<><circle cx="10" cy="6" r="5.500" strokeWidth="1.300" /><path d="M6 10L.5 15.500" strokeWidth="1.300" /></>} />
            <ListItem h={23} text="Ersetzen" caret={7} icon={<><g stroke="none" fontSize="10"><text x="5" y="7" fill="#a347a0">b</text><text x="9" y="15" fill="#2b7cb0">c</text></g><path d="M3 4c-4 2-3 8 4 8M4.500 9l3 3-3 3" stroke="#2b7cb0" /></>} />
            <ListItem h={23} text="Markieren" caret={0} icon={<path d="M2.500 .5l9 9H8l2 4-2 1.500-2-4.500-3.500 3.500z" fill="#fff" />} />
          </List>
        </Group>

        <Group name="Sprache" w={67}>
          <BigButton $w={67}>
            <BigIcon>
              <Icon w={20} h={30}>
                <rect x="4" y="1" width="12" height="22" rx="2" fill="#83beec" stroke="#2b6a9c" strokeWidth="1.500" />
                <path d="M.5 15v6c0 3 2 4.500 5 4.500h9c3 0 5-1.500 5-4.500v-6M10 25.500v3M6 28.500h9" />
              </Icon>
            </BigIcon>
            <BigLine>Diktieren</BigLine>
            <BigLine><Caret /></BigLine>
          </BigButton>
        </Group>
        <Collapse aria-label="Menüband reduzieren"><Icon w={9} h={6}><path d="M.5 5l4-4 4 4" strokeWidth="2" /></Icon></Collapse>
        <MarkBox />
        <MarkArrow width="127" height="52" viewBox="0 0 127 52"><path d="M0 26L65 1v11h58q3 0 3 3v21q0 3-3 3H65v11z" /></MarkArrow>
      </Ribbon>

      <Workspace>
        <Thumbs>
          <ThumbItem>1<Thumb><CoverTitle>Agenda in PowerPoint<br />erstellen</CoverTitle></Thumb></ThumbItem>
          <ThumbItem $active>2<Thumb $active><SmallTitle>Agenda</SmallTitle></Thumb></ThumbItem>
          <ThumbItem>3<Thumb><Chart /></Thumb></ThumbItem>
          <ThumbItem>4
            <Thumb>
              <SmallTitle>Lorem Ipsum</SmallTitle>
              <Lorem>
                {lorem.map((l, i) => <p key={l}>{i === 0 && <Bullet>•</Bullet>}{l}</p>)}
              </Lorem>
            </Thumb>
          </ThumbItem>
        </Thumbs>
        <Editor>
          <Stage>
            <Canvas>
              <Slide>
                <SlideTitle>Agenda</SlideTitle>
                <Body>
                  <Points><Point>Text hinzufügen</Point></Points>
                  <Picker>
                    {picker.map(([n, art]) => <PickerButton key={n} aria-label={n}><Icon w={30} h={30}>{art}</Icon></PickerButton>)}
                  </Picker>
                </Body>
              </Slide>
            </Canvas>
            <ScrollBar>
              <ScrollPart $solid $flex="0 0 15px" />
              <ScrollPart $flex="181" />
              <ScrollPart $solid $flex="181" />
              <ScrollPart $flex="363" />
              <ScrollPart $solid $flex="0 0 15px" />
            </ScrollBar>
          </Stage>
          <Notes><NotesInput placeholder="Klicken Sie, um Notizen hinzuzufügen" aria-label="Notizen" /></Notes>
        </Editor>
      </Workspace>
    </Page>
  );
}
